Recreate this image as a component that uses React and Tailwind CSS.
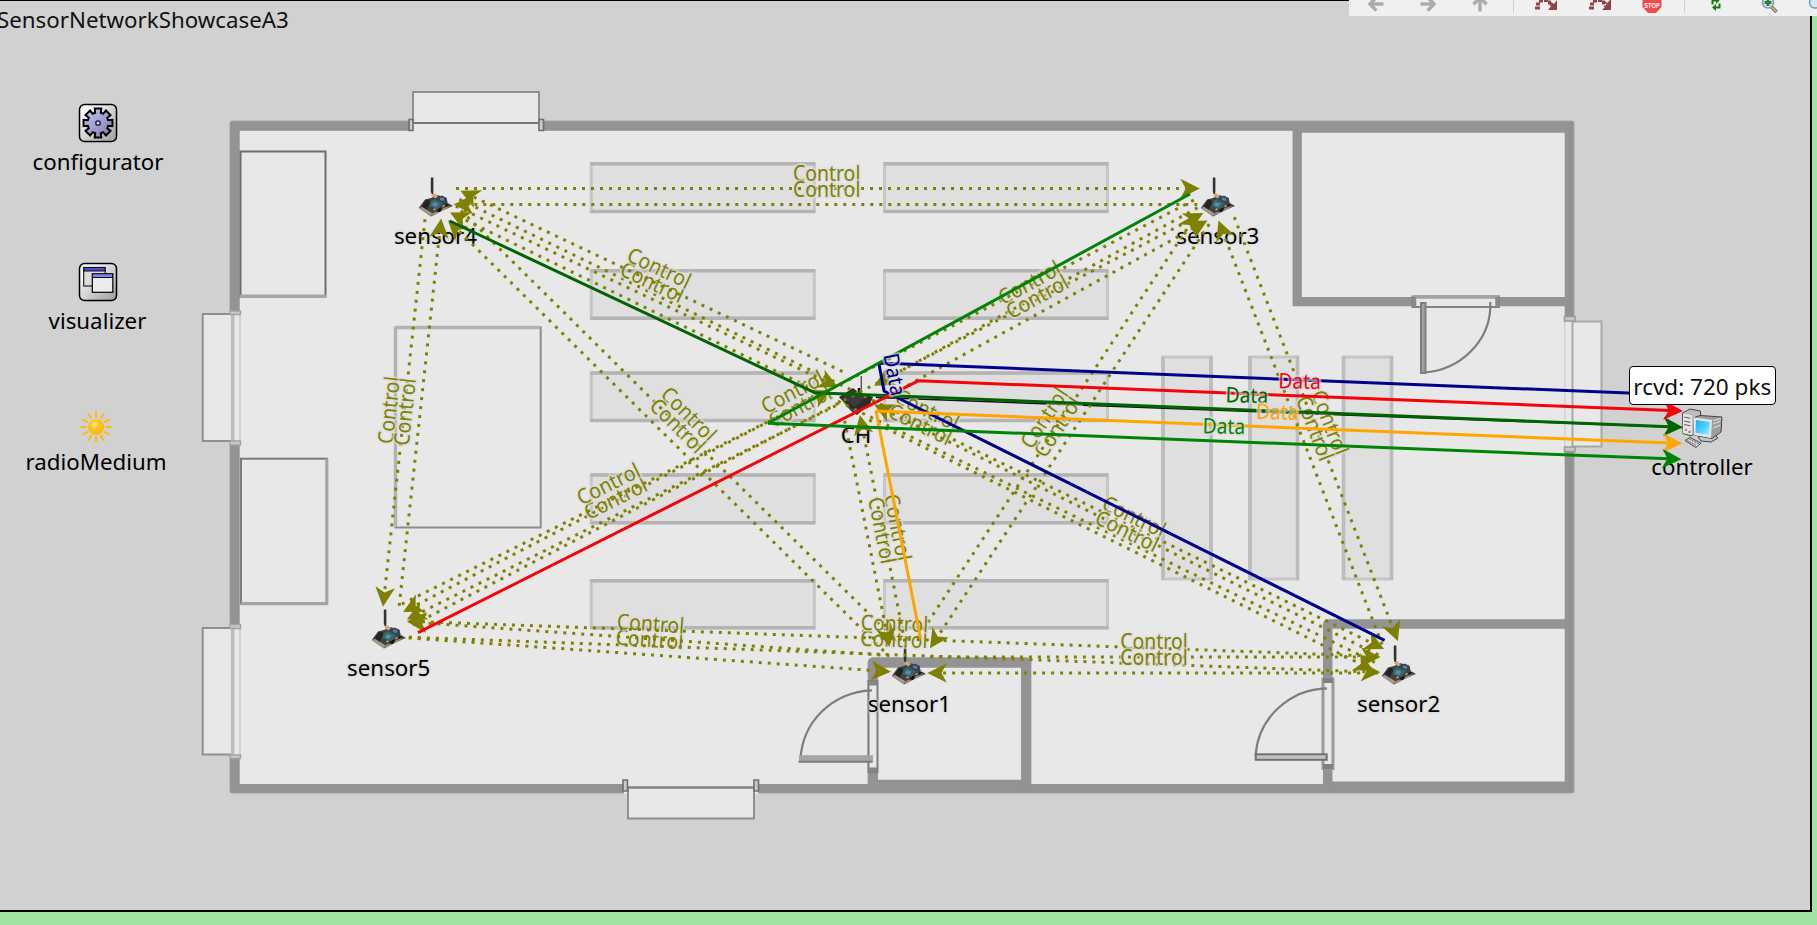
import React from "react";

const OLIVE = "#808000";

/* Node centres on the canvas and half sizes of their icon boxes */
const NODES = {
  s1: { x: 909.4, y: 665, label: "sensor1", hw: 18.5, hh: 21.5 },
  s2: { x: 1398.6, y: 665, label: "sensor2", hw: 18.5, hh: 21.5 },
  s3: { x: 1217.8, y: 196.6, label: "sensor3", hw: 18.5, hh: 21.5 },
  s4: { x: 435.5, y: 196.6, label: "sensor4", hw: 18.5, hh: 21.5 },
  s5: { x: 388.7, y: 628.5, label: "sensor5", hw: 18.5, hh: 21.5 },
  ch: { x: 856, y: 395.6, label: "CH", hw: 18.5, hh: 20 },
};

/* from, to, sideways shift of the line */
const CONTROLS = [
  ["s4", "s3", -8], ["s3", "s4", 8],
  ["s4", "s5", -8], ["s5", "s4", 8],
  ["s3", "s2", -8], ["s2", "s3", 8],
  ["s4", "s1", -8], ["s1", "s4", 8],
  ["s3", "s1", 8], ["s1", "s3", -8],
  ["s5", "s1", 8], ["s1", "s5", -8],
  ["s5", "s2", 8], ["s2", "s5", -8],
  ["s1", "s2", -8], ["s2", "s1", 8],
  ["s4", "s2", -8], ["s2", "s4", 8],
  ["s5", "s3", 8], ["s3", "s5", -8],
  ["s4", "ch", 0], ["ch", "s4", -16],
  ["s2", "ch", 0], ["ch", "s2", 16],
  ["s3", "ch", 0], ["ch", "s3", 16],
  ["ch", "s5", 0], ["s5", "ch", -16],
  ["s1", "ch", 0], ["ch", "s1", 16],
];

const ROUTES = [
  { color: "#00008b", pts: [[1384.6, 640.3], [884, 391], [878.8, 363], [1683, 395.2]], label: [894.3, 374.5, 79] },
  { color: "#006400", pts: [[449.7, 221], [814.7, 392.7], [1682.4, 427.3]], label: [1246.9, 395.5, 1.5] },
  { color: "#f40408", pts: [[418, 632.7], [918.7, 380.7], [1682.4, 411]], label: [1299.7, 381.5, 1.5] },
  { color: "#ffa500", pts: [[920.7, 639], [876, 411], [1681.8, 443.5]], label: [1277.5, 412.2, 1.5] },
  { color: "#008408", pts: [[1190, 194], [768, 423.3], [1681, 459.3]], label: [1224, 426.5, 1.5] },
];

function clip(n, dx, dy) {
  const len = Math.hypot(dx, dy);
  const ux = dx / len;
  const uy = dy / len;
  const t = Math.min(n.hw / Math.abs(ux || 1e-9), n.hh / Math.abs(uy || 1e-9));
  return [n.x + ux * t, n.y + uy * t];
}

function Head({ x, y, angle, color }) {
  return <path d="M0.500 0L-19 -9.800L-13.600 0L-19 9.800Z" fill={color} transform={`translate(${x} ${y}) rotate(${angle})`} />;
}

function LineLabel({ x, y, angle, color, children, length }) {
  return (
    <text
      transform={`translate(${x} ${y}) rotate(${angle})`}
      y="7.2"
      textAnchor="middle"
      textLength={length}
      lengthAdjust="spacingAndGlyphs"
      className="font-['Noto_Sans',sans-serif] text-[21.3px]"
      fill={color}
      stroke="#dedede"
      strokeOpacity="0.6"
      strokeWidth="4"
      strokeLinejoin="round"
      style={{ paintOrder: "stroke" }}
    >
      {children}
    </text>
  );
}

function ControlLink({ from, to, shift }) {
  const a = NODES[from];
  const b = NODES[to];
  const dx = b.x - a.x;
  const dy = b.y - a.y;
  const slope = Math.atan(dy / dx);
  const nx = -Math.sin(slope);
  const ny = Math.cos(slope);
  const [ax, ay] = clip(a, dx, dy);
  const [bx, by] = clip(b, -dx, -dy);
  const len = Math.hypot(dx, dy);
  const x1 = ax + nx * shift + (dx / len) * 2;
  const y1 = ay + ny * shift + (dy / len) * 2;
  const x2 = bx + nx * shift;
  const y2 = by + ny * shift;
  const lx = (a.x + b.x) / 2 + nx * (shift - 15);
  const ly = (a.y + b.y) / 2 + ny * (shift - 15);
  return (
    <g>
      <line x1={x1} y1={y1} x2={x2 - (dx / len) * 12} y2={y2 - (dy / len) * 12} stroke={OLIVE} strokeWidth="3" strokeDasharray="3 6" />
      <Head x={x2} y={y2} angle={(Math.atan2(dy, dx) * 180) / Math.PI} color={OLIVE} />
      <LineLabel x={lx} y={ly} angle={(slope * 180) / Math.PI} color={OLIVE} length="67.500">Control</LineLabel>
    </g>
  );
}

function Route({ color, pts }) {
  const [tx, ty] = pts[pts.length - 1];
  const [px, py] = pts[pts.length - 2];
  const angle = (Math.atan2(ty - py, tx - px) * 180) / Math.PI;
  const line = [...pts.slice(0, -1), [tx - 12, ty - 0.45]];
  return (
    <g>
      <polyline points={line.map((p) => p.join(",")).join(" ")} fill="none" stroke={color} strokeWidth="3" strokeLinejoin="bevel" />
      <Head x={tx} y={ty} angle={angle} color={color} />
    </g>
  );
}

function Shelf({ x, y, w, h }) {
  return (
    <g>
      <rect x={x} y={y} width={w} height={h} fill="#dfdfdf" stroke="#c6c6c6" strokeWidth="3" />
      {w > h ? (
        <path d={`M${x - 1} ${y}h${w + 2}M${x - 1} ${y + h}h${w + 2}`} stroke="#b4b4b4" strokeWidth="3.600" />
      ) : (
        <path d={`M${x} ${y - 1}v${h + 2}M${x + w} ${y - 1}v${h + 2}`} stroke="#bcbcbc" strokeWidth="3.600" />
      )}
    </g>
  );
}

function FloorPlan() {
  const rows = [[163.8, 47.7], [270.7, 47.5], [373, 47.5], [475, 47.7], [580.8, 47]];
  return (
    <svg className="absolute inset-0" width="1817" height="925" viewBox="0 0 1817 925">
      <rect x="229.5" y="120.500" width="1345" height="673" rx="3" fill="#a4a4a4" />
      <rect x="230.300" y="121.500" width="1343.200" height="671.200" rx="2" fill="#939393" />
      <rect x="239.700" y="130.800" width="1325" height="653.200" fill="#e8e8e8" />

      <g>
        {rows.map(([y, h]) => <Shelf key={"l" + y} x={591.3} y={y} w={223} h={h} />)}
        {rows.map(([y, h]) => <Shelf key={"r" + y} x={884.5} y={y} w={223} h={h} />)}
        <Shelf x={1163} y={357} w={48} h={222} />
        <Shelf x={1250} y={357} w={47.5} h={222} />
        <Shelf x={1343.5} y={357} w={48} h={222} />
      </g>

      <g fill="none" strokeWidth="2">
        <rect x="240.500" y="151.500" width="85" height="145" stroke="#6c6c6c" />
        <path d="M240 296.200h86" stroke="#a6a6a6" strokeWidth="3.400" />
        <rect x="241" y="458.700" width="86" height="145" stroke="#7c7c7c" />
        <path d="M241 603.700h87M326.800 458.700v146" stroke="#a4a4a4" strokeWidth="3.200" />
        <rect x="395.500" y="327.500" width="145.200" height="200" stroke="#8c8c8c" />
        <path d="M395 327.500h145M395.500 327v200" stroke="#b2b2b2" strokeWidth="3.400" />
      </g>

      {/* window bays */}
      <g fill="#e8e8e8" stroke="#8f8f8f" strokeWidth="2">
        <rect x="409" y="121" width="134" height="11" stroke="none" />
        <rect x="413" y="92" width="126" height="31" />
        <path d="M413 123h126" stroke="#777" strokeWidth="2" />
        <path d="M409 119.500h4v11h-4zM539 119.500h4.500v11H539z" fill="#c9c9c9" stroke="#6f6f6f" strokeWidth="1.600" />

        <rect x="624" y="783" width="134" height="11" stroke="none" />
        <rect x="628" y="787.500" width="126" height="31" />
        <path d="M628 787.500h126" stroke="#808080" />
        <path d="M623 780h4.500v11H623zM754 780h4.500v11H754z" fill="#c9c9c9" stroke="#6f6f6f" strokeWidth="1.600" />

        <rect x="229" y="311" width="11.500" height="134" stroke="none" />
        <rect x="202.700" y="314" width="30" height="127" />
        <path d="M232.700 311v134" stroke="#bdbdbd" strokeWidth="3.500" />
        <path d="M240 311v134" stroke="#cdcdcd" strokeWidth="1.500" />
        <path d="M230 311h10.500v3.500h-10.500z M230 441h10.500v4h-10.500z" fill="#c9c9c9" stroke="#a2a2a2" strokeWidth="1.500" />

        <rect x="229" y="625" width="11.500" height="134" stroke="none" />
        <rect x="202.700" y="628" width="30" height="126.500" />
        <path d="M232.700 625v134" stroke="#bdbdbd" strokeWidth="3.500" />
        <path d="M240 625v134" stroke="#cdcdcd" strokeWidth="1.500" />
        <path d="M230 624.500h10.500v4h-10.500z M230 755h10.500v3.500h-10.500z" fill="#c9c9c9" stroke="#a2a2a2" strokeWidth="1.500" />

        <rect x="1564" y="318" width="11" height="133" stroke="none" />
        <rect x="1572.500" y="321.500" width="29" height="125" stroke="#a8a8a8" />
        <path d="M1564.800 321v126" stroke="#d2d2d2" strokeWidth="1.500" />
        <path d="M1564.500 316.500h10.500v4.500h-10.500zM1564.500 447h10.500v4.500h-10.500z" fill="#c9c9c9" stroke="#9a9a9a" strokeWidth="1.600" />
      </g>

      {/* rooms */}
      <g fill="#e8e8e8" stroke="#939393">
        <path d="M1297.200 126V301.700H1569" fill="none" strokeWidth="9.300" />
        <path d="M1301 131.500h264" strokeWidth="2.500" />
        <path d="M872.800 787V662.500H1026.200V787" fill="none" strokeWidth="10.300" strokeLinejoin="round" />
        <path d="M872 782h154" strokeWidth="4.500" />
        <path d="M1327.700 787V624H1569" fill="none" strokeWidth="9.500" strokeLinejoin="round" />
        <path d="M1330 783.200h237" strokeWidth="3.500" />
      </g>

      {/* doors */}
      <g fill="none" stroke="#7d7d7d" strokeWidth="2">
        <rect x="1412.500" y="296.500" width="86.500" height="10.500" fill="#e8e8e8" stroke="#828282" />
        <path d="M1413 297h86" stroke="#a2a2a2" strokeWidth="3.500" />
        <path d="M1414.500 297v10M1497 297v10" stroke="#8a8a8a" strokeWidth="3.500" />
        <rect x="1421" y="303" width="4.500" height="70" fill="#a2a2a2" stroke="#7e7e7e" />
        <path d="M1490.300 302V308C1489 340 1462 370 1424 372.500" strokeWidth="2.200" />

        <rect x="868.500" y="681" width="9" height="91" fill="#e8e8e8" />
        <path d="M868.500 683h9M868.500 770h9" stroke="#858585" strokeWidth="5" />
        <path d="M872 690.300C832 692 802 722 800.500 760" strokeWidth="2.200" />
        <path d="M799 758.800h74" stroke="#a5a5a5" strokeWidth="7" />
        <path d="M798.500 761.800h74" stroke="#7d7d7d" />

        <rect x="1323" y="679" width="10" height="89.500" fill="#e8e8e8" stroke="#9a9a9a" strokeWidth="3" />
        <path d="M1323 680.500h10M1323 766.500h10" stroke="#808080" strokeWidth="5" />
        <path d="M1327 688.300C1290 689 1258 718 1255.700 755" strokeWidth="2.200" />
        <rect x="1255.700" y="754.300" width="71" height="5.500" fill="#c2c2c2" stroke="#707070" />
      </g>
    </svg>
  );
}

function SensorIcon() {
  return (
    <svg width="36" height="40" viewBox="0 0 36 40">
      <path d="M0.800 31L7 22.500L13 21L19 18L28 20.500L30 26L35 29L22 34.500L13 39.500Z" fill="#45403b" />
      <path d="M0.800 31L4 30L14 36L13 39.500Z" fill="#a39b8d" />
      <path d="M4 29L8.500 22.500L13 24.500L8.500 32.500Z" fill="#232322" />
      <path d="M12.500 24.500L16.500 22L25 26L20.500 32L11.500 29.500Z" fill="#356474" />
      <path d="M15.500 25L20.500 26.500L18 30L14 28.500Z" fill="#5690a0" />
      <path d="M19.500 20.500L24 18.500L29 21.500L27.500 26L20.500 24Z" fill="#32435f" />
      <path d="M22 20.500L26 21L26 24L22 23Z" fill="#617f98" />
      <path d="M13 37L25 31L34.500 28.500L14 39.300Z" fill="#968a75" />
      <path d="M18 34.500l3.500-3.500 3 .5-2.500 3.500zM27 30l1.500-3.500 2.500 1z" fill="#141313" />
      <path d="M15.500 33l2-1.200M24.500 29.500l2-1M29.500 25.500l2 .8" stroke="#cfc7b4" strokeWidth="1.300" />
      <path d="M13 18.500L16 16L20 19L17.500 21.500Z" fill="#cfa878" />
      <path d="M12.800 0.500h2.600v13l-.3 3.500h-1.600l-.7-3z" fill="#3b3030" />
    </svg>
  );
}

function HeadIcon() {
  return (
    <svg width="36" height="40" viewBox="0 0 36 40">
      <path d="M23.300 0V16" stroke="#555" strokeWidth="1.400" />
      <path d="M1 21L15 12L20 16L35 21L32 28L19 39L13 35Z" fill="#2d2c2c" />
      <path d="M4 21L14 14L29 20L17 31Z" fill="#3c3b3b" />
      <path d="M2 22L14 34L19 37" stroke="#686666" fill="none" />
      <path d="M21 12v5" stroke="#161616" strokeWidth="2.500" />
    </svg>
  );
}

function Plate({ children }) {
  return (
    <svg width="40" height="40" viewBox="0 0 40 40">
      <defs>
        <linearGradient id="plate" x1="0" y1="0" x2="1" y2="1">
          <stop offset="0.200" stopColor="#f5f5f5" />
          <stop offset="1" stopColor="#9e9e9e" />
        </linearGradient>
        <linearGradient id="gear" x1="0" y1="0" x2="1" y2="1">
          <stop offset="0" stopColor="#c8c8ee" />
          <stop offset="1" stopColor="#7a7ab4" />
        </linearGradient>
      </defs>
      <rect x="1.500" y="1.500" width="37" height="37" rx="5" fill="url(#plate)" stroke="#000" strokeWidth="1.500" />
      {children}
    </svg>
  );
}

function GearIcon() {
  const teeth = [];
  for (let i = 0; i < 8; i++) {
    const c = (i * Math.PI) / 4;
    [[-0.27, 10.6], [-0.22, 14.8], [0.22, 14.8], [0.27, 10.6]].forEach(([d, r]) => {
      teeth.push(`${(20 + r * Math.sin(c + d)).toFixed(2)},${(20 - r * Math.cos(c + d)).toFixed(2)}`);
    });
  }
  return (
    <Plate>
      <polygon points={teeth.join(" ")} fill="url(#gear)" stroke="#000" strokeWidth="2" />
      <circle cx="20" cy="20" r="2.200" fill="#d2d2f0" stroke="#15152c" strokeWidth="1.300" />
    </Plate>
  );
}

function WindowsIcon() {
  return (
    <Plate>
      <rect x="5.700" y="5.500" width="21.500" height="18.500" fill="#dcdcdc" stroke="#222" strokeWidth="1.200" />
      <rect x="6" y="5.500" width="21" height="3.500" fill="#4a4ad0" stroke="#111" strokeWidth="1" />
      <rect x="14.300" y="11.800" width="20.500" height="18.500" fill="#ececec" stroke="#000" strokeWidth="1.200" />
      <rect x="14.500" y="11.800" width="20" height="3.700" fill="#8484ec" stroke="#111" strokeWidth="1" />
    </Plate>
  );
}

function SunIcon() {
  return (
    <svg width="40" height="40" viewBox="0 0 40 40" className="translate-y-1">
      <defs>
        <radialGradient id="sun" cx="0.420" cy="0.350" r="0.650">
          <stop offset="0" stopColor="#fff0a4" />
          <stop offset="0.400" stopColor="#ffc421" />
          <stop offset="1" stopColor="#ffb400" />
        </radialGradient>
      </defs>
      <g stroke="#ffba08" strokeWidth="2" strokeLinecap="round">
        {[0, 30, 60, 90, 120, 150, 180, 210, 240, 270, 300, 330].map((a) => (
          <path key={a} d="M20 9.700V5" transform={`rotate(${a} 20 20)`} />
        ))}
      </g>
      <circle cx="20" cy="20" r="8" fill="url(#sun)" />
    </svg>
  );
}

function ComputerIcon() {
  return (
    <svg width="42" height="40" viewBox="0 0 42 40">
      <defs>
        <linearGradient id="screen" x1="0" y1="0" x2="1" y2="1">
          <stop offset="0" stopColor="#17aef0" />
          <stop offset="0.500" stopColor="#43d0ff" />
          <stop offset="1" stopColor="#a6f1ff" />
        </linearGradient>
      </defs>
      <path d="M1.500 5L9 1L19.500 3L19.500 22L10 28L2 25.500Z" fill="#bcbcbc" stroke="#444" strokeWidth="1" />
      <path d="M2 5.500L11 7.500V27L2 25Z" fill="#e4e4e4" />
      <path d="M3.300 9l6 1.300M3.300 13l6 1.300M3.300 16.500l6 1.300" stroke="#555" strokeWidth="1" />
      <circle cx="5" cy="22" r="0.900" fill="#e83820" />
      <circle cx="8.500" cy="24" r="1.100" fill="#1b9a30" />
      <path d="M17 29L33 26L37 30L30 34L20 33Z" fill="#c4c4c4" stroke="#444" strokeWidth="1" />
      <path d="M13.500 9.500L19 7.500L41 9L40 24L31 30.500L12.500 27Z" fill="#9d9d9d" stroke="#444" strokeWidth="1" />
      <path d="M13 9.500L31 12L30 30L12.500 27Z" fill="#e6e6e6" />
      <path d="M15 12L28.700 14L28 27L14.500 24.700Z" fill="url(#screen)" />
      <path d="M32 12.500L40 10.500M32 16L39.500 13M32 20L39.500 17" stroke="#e6e6e6" strokeWidth="1" />
      <path d="M4 32.500L9 29.500L20 35L15 39.500Z" fill="#dadada" stroke="#444" strokeWidth="1" />
      <path d="M6 32.500l9 4.700M8.500 31l9 4.700" stroke="#777" strokeWidth="1.200" strokeDasharray="2 0.700" />
    </svg>
  );
}

function Node({ x, y, label, glow, children }) {
  return (
    <div
      className="absolute flex w-[180px] -translate-x-1/2 flex-col items-center gap-1"
      style={{ left: x, top: y - 20 }}
    >
      <div className="flex h-10 items-center justify-center">{children}</div>
      <div
        className={
          "text-[22.3px] leading-[30px] whitespace-nowrap text-black " +
          (glow ? "[text-shadow:0_0_3px_#d4d4d4,0_0_3px_#d4d4d4,0_0_2px_#d4d4d4]" : "")
        }
      >
        {label}
      </div>
    </div>
  );
}

function ArrowIcon({ turn }) {
  return (
    <svg width="18" height="18" viewBox="0 0 18 18">
      <g transform={`rotate(${turn} 9 9)`} fill="none" stroke="#aaaaaa" strokeWidth="3.400">
        <path d="M16.500 9H4" />
        <path d="M9.300 2.300L3 9l6.300 6.700" />
      </g>
    </svg>
  );
}

function StepIcon({ fast }) {
  return (
    <svg width="24" height="18" viewBox="0 0 24 18">
      <g fill="#8c4446">
        <path d="M1 11.500h5v3H1zM2 7.500h4v3H2zM5 4h4v3.500H5zM10 3h4v4h-4zM14 5.500h3v4h-3z" />
        <path d={fast ? "M23 4v11h-9l3-3h-2l4-3-4-1 2-2 2 2z" : "M23 5v10h-9l3-3.500L15 9l2-2 3 2z"} />
      </g>
    </svg>
  );
}

function Toolbar() {
  return (
    <div className="absolute top-0 right-0 h-4 w-[468px] overflow-hidden bg-[#f0f0f0]">
      <div className="-mt-[5px] flex w-[500px] items-start">
        <div className="flex w-[164px] gap-[34px] pl-[18px]">
          <ArrowIcon turn={0} />
          <ArrowIcon turn={180} />
          <ArrowIcon turn={90} />
        </div>
        <div className="h-[18px] w-px bg-[#cfcfcf]" />
        <div className="flex w-[170px] gap-[30px] pl-[20px]">
          <StepIcon />
          <StepIcon fast />
          <svg width="20" height="20" viewBox="0 0 20 20" className="-mt-px">
            <path d="M6 0h8l5.500 5.500v7.500L14 19H6L0.500 13V5.500Z" fill="#f24a4c" />
            <text x="10" y="13.500" textAnchor="middle" textLength="15.500" lengthAdjust="spacingAndGlyphs" fill="#fff" className="font-['Liberation_Sans',sans-serif] text-[7.500px] font-bold">STOP</text>
          </svg>
        </div>
        <div className="h-[18px] w-px bg-[#cfcfcf]" />
        <div className="flex gap-[39px] pl-[25px]">
          <svg width="12" height="18" viewBox="0 0 12 18">
            <path d="M2.500 9.500V5.500H7M9.500 8.500V12.500H5" fill="none" stroke="#187d10" strokeWidth="2" />
            <path d="M6 2L9.500 5.500L6 9ZM6 9L2 12.500L6 16Z" fill="#187d10" />
          </svg>
          <svg width="18" height="18" viewBox="0 0 18 18">
            <path d="M10 11.500L15.500 17" stroke="#7d6a57" strokeWidth="3.600" />
            <path d="M10.500 12L15 16.500" stroke="#dfba92" strokeWidth="1.600" />
            <circle cx="7" cy="7.500" r="5.500" fill="#d3e6f3" stroke="#7895b2" strokeWidth="1.400" />
            <path d="M3.500 7.500h7M7 4v7" stroke="#2d8034" strokeWidth="2.800" />
          </svg>
          <svg width="18" height="18" viewBox="0 0 18 18" className="-ml-[10px]">
            <circle cx="7" cy="7.500" r="5.500" fill="#d3e6f3" stroke="#7895b2" strokeWidth="1.400" />
          </svg>
        </div>
      </div>
    </div>
  );
}

export default function App() {
  return (
    <div className="relative h-[925px] w-[1817px] overflow-hidden bg-[#a1e3a1] font-['Noto_Sans',sans-serif]">
      <div className="h-[911.6px] w-[1812px] border-t border-r-2 border-b-2 border-black bg-[#d1d1d1]">
        <div className="-ml-[3px] pt-[4px] text-[22.3px] leading-[30px] text-[#111]">SensorNetworkShowcaseA3</div>
      </div>

      <FloorPlan />

      <Node x={98} y={123} label="configurator"><GearIcon /></Node>
      <Node x={97.5} y={282} label="visualizer"><WindowsIcon /></Node>
      <Node x={96} y={423} label="radioMedium"><SunIcon /></Node>
      <Node x={1702} y={427.5} label="controller"><ComputerIcon /></Node>
      {Object.entries(NODES).map(([id, n]) => (
        <Node key={id} x={n.x} y={n.y} label={n.label} glow>
          {id === "ch" ? <HeadIcon /> : <SensorIcon />}
        </Node>
      ))}

      <svg className="absolute inset-0" width="1817" height="925" viewBox="0 0 1817 925">
        <path d="M876 397.500L1682 427.500" stroke="#111" strokeWidth="1.500" />
        {CONTROLS.map(([from, to, shift]) => (
          <ControlLink key={from + to} from={from} to={to} shift={shift} />
        ))}
        {ROUTES.map((r) => <Route key={r.color} color={r.color} pts={r.pts} />)}
        {ROUTES.map((r) => (
          <LineLabel key={r.color} x={r.label[0]} y={r.label[1]} angle={r.label[2]} color={r.color} length="42.500">Data</LineLabel>
        ))}
      </svg>

      <div className="absolute top-[366px] left-[1629px] flex h-[39px] w-[146.500px] items-center justify-center rounded-[4px] border border-black bg-white pt-[2px] text-[22.5px] leading-[30px] whitespace-nowrap text-[#111]">
        rcvd: 720 pks
      </div>

      <Toolbar />
    </div>
  );
}
